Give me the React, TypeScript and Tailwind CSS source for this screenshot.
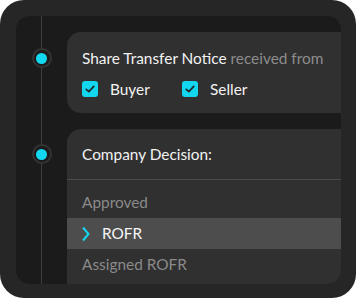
function Dot() {
  return (
    <div className="relative z-10 flex h-5 w-5 items-center justify-center rounded-full border-2 border-[#333333] bg-[#1b1b1b]">
      <div className="h-[11px] w-[11px] rounded-full bg-[#12d7ef]" />
    </div>
  );
}

function Checkbox() {
  return (
    <span className="flex h-4 w-4 items-center justify-center rounded-[3px] bg-[#12d7ef]">
      <svg viewBox="0 0 16 16" className="h-3 w-3" fill="none" stroke="#1f2a30" strokeWidth="2.4" strokeLinecap="round" strokeLinejoin="round">
        <polyline points="3 8.5 6.5 11.5 13 4.5" />
      </svg>
    </span>
  );
}

export default function App() {
  return (
    <div className="h-[300px] w-[357px] bg-white font-['Lato',sans-serif]">
      <div className="h-[298px] w-[356px] overflow-hidden rounded-[24px] bg-[#262626] pl-4 pt-4">
        <div className="relative flex h-[268px] w-[325px] flex-col gap-4 overflow-hidden rounded-[14px] bg-[#1b1b1b] pt-4">
          {/* timeline line */}
          <div className="absolute bottom-0 left-[25px] top-0 w-px bg-[#3d3d3d]" />

          {/* Share transfer notice */}
          <div className="flex">
            <div className="flex w-[51px] shrink-0 justify-center pt-[16px]">
              <Dot />
            </div>
            <div className="h-[81px] w-[300px] shrink-0 rounded-l-[14px] bg-[#303030] pl-[15px] pt-[15px]">
              <p className="text-[15.4px] leading-[22px] text-[#f2f2f2]">
                Share Transfer Notice <span className="text-[#8c8c8c]">received from</span>
              </p>
              <div className="mt-[10px] flex items-center text-[15.4px] leading-[20px] text-[#f2f2f2]">
                <div className="flex w-[100px] items-center gap-3">
                  <Checkbox />
                  <span>Buyer</span>
                </div>
                <div className="flex items-center gap-3">
                  <Checkbox />
                  <span>Seller</span>
                </div>
              </div>
            </div>
          </div>

          {/* Company decision */}
          <div className="flex flex-1">
            <div className="flex w-[51px] shrink-0 justify-center pt-[15px]">
              <Dot />
            </div>
            <div className="w-[300px] shrink-0 rounded-tl-[14px] bg-[#303030]">
              <div className="h-[51px] border-b border-[#4a4a4a] pl-[15px] pt-[14px] text-[15.4px] leading-[22px] text-[#f2f2f2]">
                Company Decision:
              </div>
              <ul className="pt-[7px] text-[15.4px]">
                <li className="flex h-[31px] items-center pl-[15px] text-[#8a8a8a]">Approved</li>
                <li className="flex h-[31px] items-center bg-[#4d4d4d] pl-[15px] text-[#f5f5f5]">
                  <svg viewBox="0 0 8 16" className="mr-[12px] h-[16px] w-[8px]" fill="none" stroke="#12d7ef" strokeWidth="2">
                    <polyline points="1 1.5 6.5 8 1 14.5" />
                  </svg>
                  ROFR
                </li>
                <li className="flex h-[31px] items-center pl-[15px] text-[#8a8a8a]">Assigned ROFR</li>
              </ul>
            </div>
          </div>
        </div>
      </div>
    </div>
  );
}
